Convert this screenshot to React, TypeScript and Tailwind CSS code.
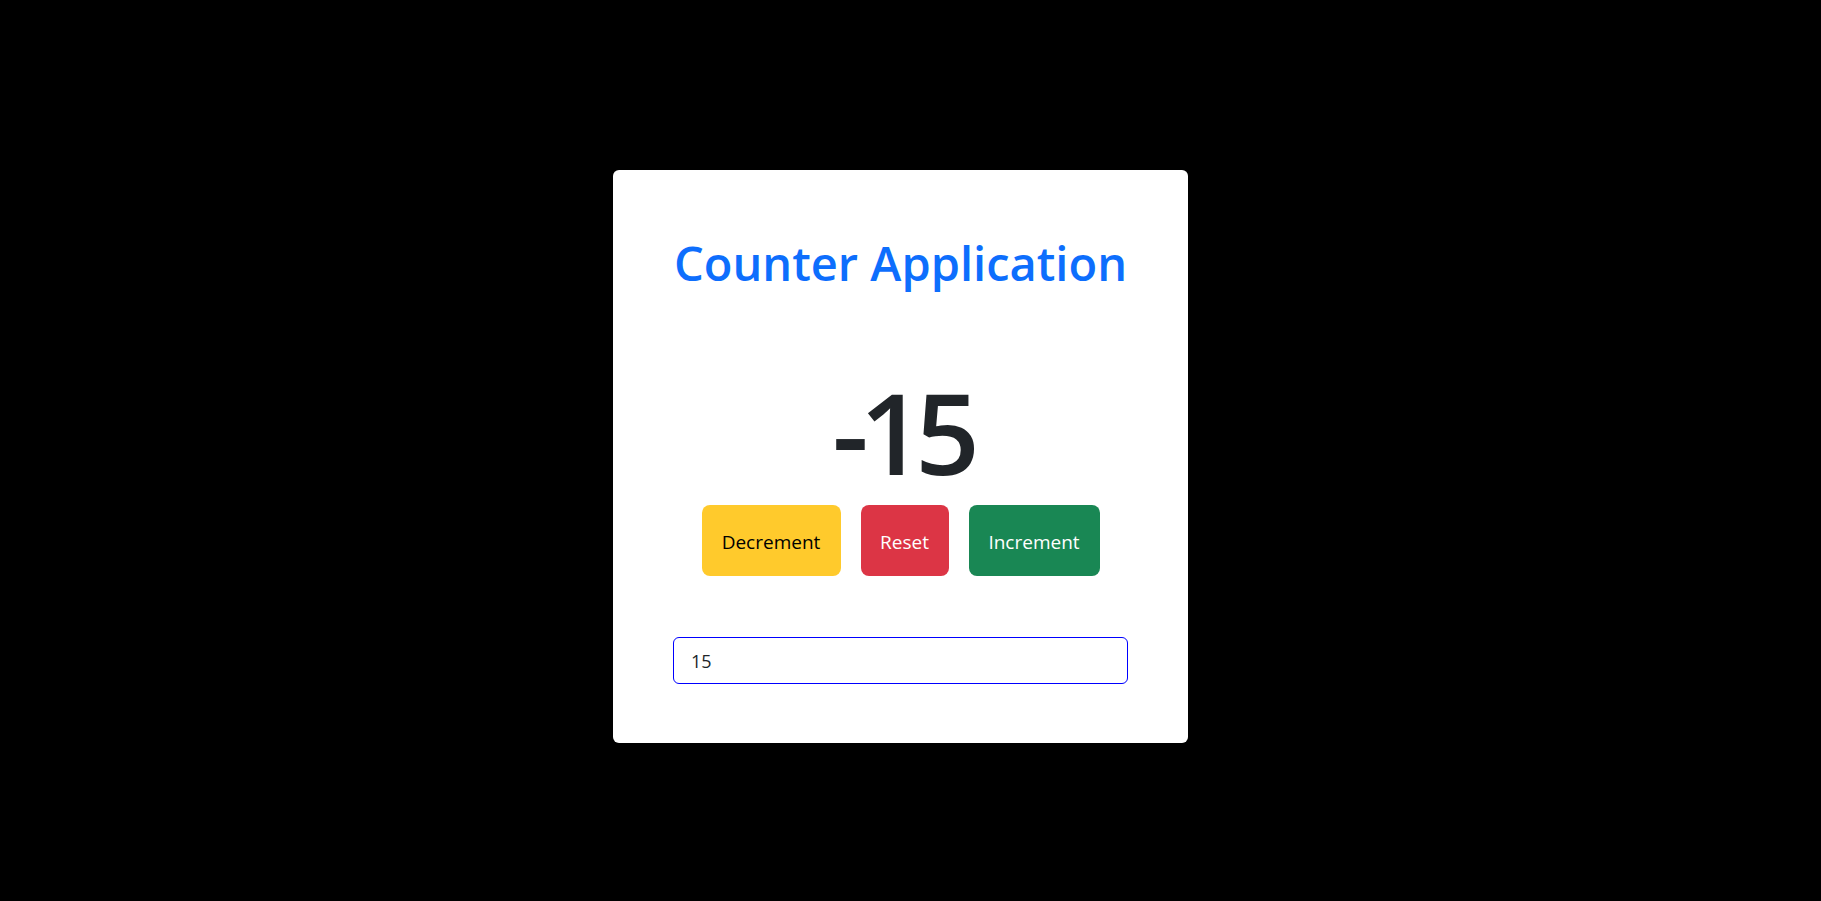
import { useState } from 'react';

export default function App() {
  const [count, setCount] = useState(-15);
  const [step, setStep] = useState('15');

  const amount = Number(step) || 0;

  return (
    <div
      className="flex min-h-screen items-center justify-center bg-black pr-[20px] pt-[12px]"
      style={{ fontFamily: '"Open Sans", "Noto Sans", sans-serif' }}
    >
      <div className="flex h-[573px] w-[575px] flex-col items-center rounded-md bg-white px-[60px] pt-[69px]">
        <h1 className="text-[47px] font-semibold leading-[48px] text-[#0d6efd]">Counter Application</h1>

        <div className="mt-[97px] pl-[2px] text-[113px] font-semibold leading-[95px] tracking-[-9px] text-[#212529]">
          {count}
        </div>

        <div className="mt-[26px] flex gap-5">
          <button
            onClick={() => setCount((c) => c - amount)}
            className="h-[71px] w-[139px] rounded-lg bg-[#ffca2c] pt-[3px] text-[19px] text-black"
          >
            Decrement
          </button>
          <button
            onClick={() => setCount(0)}
            className="h-[71px] w-[88px] rounded-lg bg-[#dc3545] pt-[3px] text-[19px] text-white"
          >
            Reset
          </button>
          <button
            onClick={() => setCount((c) => c + amount)}
            className="h-[71px] w-[131px] rounded-lg bg-[#198754] pt-[3px] text-[19px] text-white"
          >
            Increment
          </button>
        </div>

        <input
          value={step}
          onChange={(e) => setStep(e.target.value)}
          className="mt-[61px] h-[47px] w-full rounded-md border-[1.5px] border-[#0000ff] px-[17px] text-[18px] text-[#212529] outline-none"
        />
      </div>
    </div>
  );
}
